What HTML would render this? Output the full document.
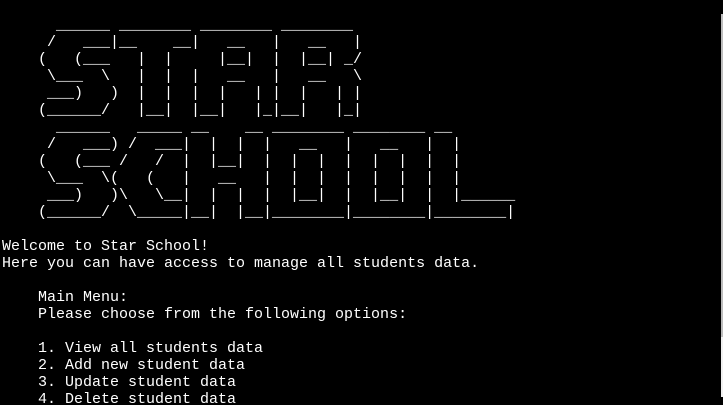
<!DOCTYPE html>
<html><head><meta charset="utf-8"><style>
html,body{margin:0;padding:0;background:#000;width:723px;height:405px;overflow:hidden;position:relative}
pre{margin:0;padding:0 0 0 2px;color:#fff;font-family:"Liberation Mono",monospace;font-size:15px;line-height:17px;white-space:pre}
.sb{position:absolute;left:721px;top:14px;width:2px;height:323px;background:#bdbdbd}
.sb2{position:absolute;left:721px;top:337px;width:2px;height:60px;background:#f0f0f0}
</style></head><body><pre>

      ______ ________ ________ ________
     /   ___|__    __|   __   |   __   |
    (   (___   |  |     |__|  |  |__| _/
     \___  \   |  |  |   __   |   __   \
     ___)   )  |  |  |  |   | |  |   | |
    (______/   |__|  |__|   |_|__|   |_|
      ______   _____ __    __ ________ ________ __
     /   ___) /  ___|  |  |  |   __   |   __   |  |
    (   (___ /   /  |  |__|  |  |  |  |  |  |  |  |
     \___  \(   (   |   __   |  |  |  |  |  |  |  |
     ___)   )\   \__|  |  |  |  |__|  |  |__|  |  |______
    (______/  \_____|__|  |__|________|________|________|

Welcome to Star School!
Here you can have access to manage all students data.

    Main Menu:
    Please choose from the following options:

    1. View all students data
    2. Add new student data
    3. Update student data
    4. Delete student data
</pre><div class="sb"></div><div class="sb2"></div></body></html>
